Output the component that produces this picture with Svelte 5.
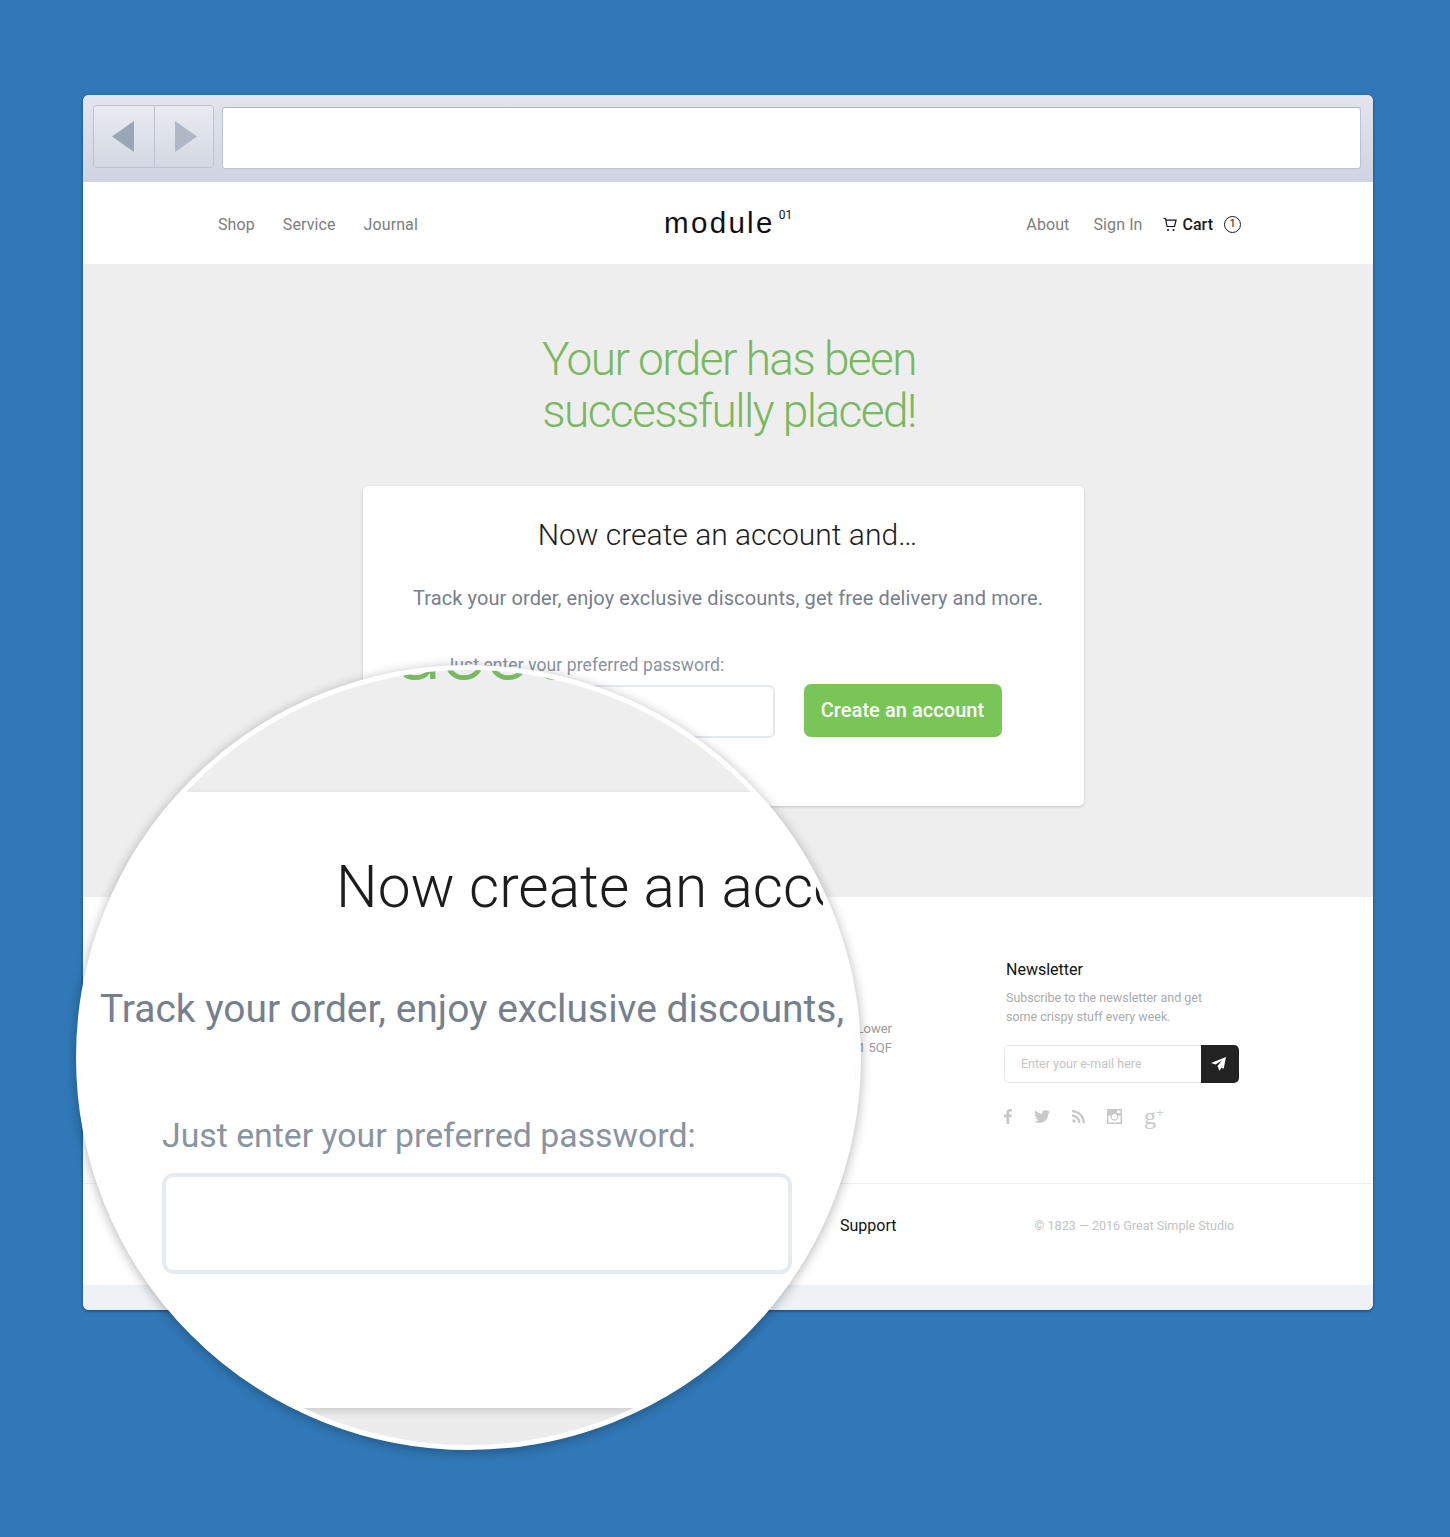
<script lang="ts">
  const navLeft = ['Shop', 'Service', 'Journal'];
</script>

<div class="page">
  <div class="window">
    <div class="chrome">
      <div class="arrows">
        <button type="button" class="arrow back" aria-label="Back">
          <svg width="22" height="31" viewBox="0 0 22 31"><path d="M22 0v31L0 15.500z" fill="#9aa5b6" /></svg>
        </button>
        <button type="button" class="arrow forward" aria-label="Forward">
          <svg width="22" height="31" viewBox="0 0 22 31"><path d="M0 0v31l22-15.500z" fill="#b0b8c7" /></svg>
        </button>
      </div>
      <div class="address"></div>
    </div>

    <header class="nav">
      <nav class="nav-left">
        {#each navLeft as item}
          <span>{item}</span>
        {/each}
      </nav>
      <div class="logo">module<sup>01</sup></div>
      <nav class="nav-right">
        <span>About</span>
        <span>Sign In</span>
        <span class="cart">
          <svg width="14" height="15" viewBox="0 0 14 15" fill="none" stroke="#111" stroke-width="1.2">
            <path d="M0.5 1.500h2l1.600 8h7.400l1.600-6.400H3" />
            <circle cx="5" cy="13" r="1" fill="#111" stroke="none" />
            <circle cx="10.500" cy="13" r="1" fill="#111" stroke="none" />
          </svg>
          Cart
        </span>
        <span class="count">1</span>
      </nav>
    </header>

    <main class="hero">
      <h1>Your order has been<br />successfully placed!</h1>
      <section class="card">
        <h2>Now create an account and…</h2>
        <p class="lead">Track your order, enjoy exclusive discounts, get free delivery and more.</p>
        <label class="pw-label" for="pw">Just enter your preferred password:</label>
        <div class="pw-row">
          <input id="pw" class="pw-input" type="password" />
          <button type="button" class="create">Create an account</button>
        </div>
      </section>
    </main>

    <footer class="footer">
      <div class="footer-top">
        <div class="address-col">
          <p>Lower</p>
          <p>W1 5QF</p>
        </div>
        <div class="newsletter">
          <h3>Newsletter</h3>
          <p>Subscribe to the newsletter and get<br />some crispy stuff every week.</p>
          <div class="subscribe">
            <span class="placeholder">Enter your e-mail here</span>
            <button type="button" class="send" aria-label="Send">
              <svg width="15" height="14" viewBox="0 0 15 14"><path d="M15 0 0 6l4.500 1.500L11 3.500 6.500 9l2 5 1.700-3.200 2.500 1z" fill="#fff" /></svg>
            </button>
          </div>
          <div class="social">
            <svg width="8" height="15" viewBox="0 0 8 15"><path d="M2.400 15V8.200H0V5.600h2.400V3.700C2.400 1.300 3.800 0 6 0l2 .1v2.400H6.600c-1.100 0-1.400.6-1.400 1.400v1.700h2.700l-.4 2.600H5.200V15z" /></svg>
            <svg width="16" height="13" viewBox="0 0 16 13"><path d="M16 1.500l-1.800.5 1.300-1.700-2 .8A3.200 3.200 0 0 0 8 3.700C5.300 3.600 3 2.300 1.200.4.300 2 .8 3.800 2.200 4.800L.7 4.400c0 1.600 1.100 2.900 2.600 3.300H1.900c.4 1.300 1.600 2.200 3 2.300C3.500 11.100 1.800 11.600 0 11.400 6.500 15.200 14.600 11 14.400 3.400z" /></svg>
            <svg width="13" height="13" viewBox="0 0 13 13"><circle cx="2" cy="11" r="1.700" /><path d="M0 4.500v2.300A6 6 0 0 1 6.200 13h2.300A8.400 8.400 0 0 0 0 4.500z" /><path d="M0 0v2.300A10.700 10.700 0 0 1 10.700 13H13A13 13 0 0 0 0 0z" /></svg>
            <svg width="15" height="15" viewBox="0 0 15 15"><path fill-rule="evenodd" d="M0 0h15v15H0zM1.500 6.500V13.500h12V6.500h-2.200a4 4 0 1 1-7.600 0zM10 1.500v2.500h3.500V1.500zM7.500 5a2.700 2.700 0 1 0 0 5.400 2.700 2.700 0 0 0 0-5.400z" /></svg>
            <span class="gplus">g<sup>+</sup></span>
          </div>
        </div>
      </div>
      <div class="footer-bottom">
        <span class="support">Support</span>
        <span class="copyright">© 1823 — 2016 Great Simple Studio</span>
      </div>
      <div class="strip"></div>
    </footer>
  </div>

  <!-- magnifier lying over the window -->
  <div class="lens">
    <div class="lens-hero">
      <div class="lens-heading">successfully placed!</div>
    </div>
    <div class="lens-card">
      <h2>Now create an account and…</h2>
      <p class="lens-lead">Track your order, enjoy exclusive discounts, get free delivery and more.</p>
      <div class="lens-label">Just enter your preferred password:</div>
      <div class="lens-input"></div>
    </div>
    <div class="lens-foot"></div>
  </div>
</div>

<style>
  :global(body) {
    margin: 0;
    background: #3078b7;
  }

  .page {
    position: relative;
    height: 1537px;
    padding: 95px 77px 0 83px;
    box-sizing: border-box;
    font-family: Roboto, "Liberation Sans", sans-serif;
    overflow: hidden;
  }

  .window {
    border-radius: 6px;
    overflow: hidden;
    box-shadow: 0 1px 3px rgba(10, 40, 80, 0.7);
    background: #fff;
  }

  .chrome {
    height: 87px;
    box-sizing: border-box;
    padding: 10px 12px 13px 10px;
    display: flex;
    gap: 8px;
    background: linear-gradient(#e2e5ed, #cfd5e0);
  }

  .arrows {
    display: flex;
    width: 121px;
    height: 63px;
    box-sizing: border-box;
    border: 1px solid #bcc3d0;
    border-radius: 4px;
    overflow: hidden;
  }

  .arrow {
    flex: 1;
    padding: 0;
    border: none;
    background: linear-gradient(#e8ebf1, #d3d8e2);
    display: flex;
    align-items: center;
    justify-content: center;
  }

  .back {
    flex: 0 0 60px;
    padding-right: 3px;
  }

  .forward {
    padding-left: 3px;
    border-left: 1px solid #bcc3d0;
  }

  .address {
    flex: 1;
    height: 62px;
    margin-top: 2px;
    box-sizing: border-box;
    background: #fff;
    border: 1px solid #bcc3d0;
    border-top-color: #aeb4c0;
    border-radius: 3px;
  }

  .nav {
    height: 82px;
    box-sizing: border-box;
    padding: 2px 132px 0 135px;
    display: flex;
    align-items: center;
    justify-content: space-between;
    font-size: 16px;
    letter-spacing: 0.1px;
    color: #7d7d7d;
  }

  .nav-left,
  .nav-right {
    display: flex;
    align-items: center;
  }

  .nav-left {
    gap: 28px;
  }

  .nav-right {
    gap: 24px;
  }

  .cart {
    display: flex;
    align-items: center;
    gap: 6px;
    margin-left: -4px;
    letter-spacing: 0;
    font-weight: 500;
    color: #1a1a1a;
  }

  .count {
    width: 17px;
    height: 17px;
    box-sizing: border-box;
    margin-left: -13px;
    border: 1.5px solid #1a1a1a;
    border-radius: 50%;
    font-size: 11px;
    line-height: 14px;
    letter-spacing: 0;
    text-align: center;
    color: #1a1a1a;
  }

  .logo {
    margin: -2px 0 0 12px;
    font-family: "Liberation Sans", Roboto, sans-serif;
    font-size: 29.500px;
    letter-spacing: 2.300px;
    color: #111;
  }

  .logo sup {
    margin-left: 4px;
    font-family: Roboto, sans-serif;
    font-size: 12px;
    letter-spacing: 0;
    line-height: 0;
    vertical-align: 14px;
  }

  .hero {
    height: 633px;
    box-sizing: border-box;
    padding-top: 69px;
    background: #eeeeee;
    display: flex;
    flex-direction: column;
    align-items: center;
  }

  h1 {
    margin: 0 0 49px;
    padding-left: 2px;
    font-size: 46px;
    line-height: 52px;
    font-weight: 300;
    letter-spacing: -1.550px;
    text-align: center;
    color: #78b860;
  }

  .card {
    width: 721px;
    height: 320px;
    margin-left: -10px;
    box-sizing: border-box;
    padding: 30px 0 0 87px;
    background: #fff;
    border-radius: 5px;
    box-shadow: 0 1px 3px rgba(0, 0, 0, 0.18);
  }

  .card h2 {
    width: 730px;
    margin: 0 0 0 -87px;
    font-size: 30px;
    line-height: 38px;
    font-weight: 300;
    text-align: center;
    color: #1c1c1c;
  }

  .lead {
    width: 731px;
    margin: 31px 0 0 -87px;
    font-size: 20px;
    line-height: 26px;
    letter-spacing: 0.1px;
    text-align: center;
    color: #76808c;
  }

  .pw-label {
    display: block;
    margin: 42px 0 0 -5px;
    font-size: 17.500px;
    line-height: 24px;
    letter-spacing: 0.1px;
    color: #8a93a0;
  }

  .pw-row {
    display: flex;
    gap: 29px;
    margin-top: 7px;
  }

  .pw-input {
    width: 325px;
    height: 53px;
    margin-top: 1px;
    box-sizing: border-box;
    border: 2px solid #e4e9ef;
    border-radius: 6px;
    background: #fff;
  }

  .create {
    width: 198px;
    height: 53px;
    padding: 0 0 2px;
    border: none;
    border-radius: 7px;
    background: #79c558;
    color: #fff;
    font: 500 20px Roboto, sans-serif;
    letter-spacing: 0.05px;
  }

  .footer-top {
    height: 287px;
    box-sizing: border-box;
    display: flex;
    border-bottom: 1px solid #eeeff2;
  }

  .address-col {
    width: 923px;
    box-sizing: border-box;
    padding: 123px 114px 0 0;
    text-align: right;
    font-size: 13px;
    line-height: 18.500px;
    color: #9a9a9a;
  }

  .address-col p {
    margin: 0;
  }

  .newsletter {
    width: 236px;
    padding-top: 62px;
  }

  .newsletter h3 {
    margin: 0;
    font-size: 16px;
    line-height: 22px;
    font-weight: 400;
    color: #111;
  }

  .newsletter p {
    margin: 7px 0 0;
    font-size: 12.500px;
    line-height: 19px;
    color: #aaaaaa;
  }

  .subscribe {
    width: 235px;
    height: 38px;
    margin: 19px 0 0 -2px;
    display: flex;
    align-items: stretch;
  }

  .placeholder {
    flex: 1;
    box-sizing: border-box;
    padding-left: 16px;
    border: 1.5px solid #e4e6ea;
    border-right: none;
    border-radius: 5px 0 0 5px;
    font-size: 12.500px;
    line-height: 35px;
    color: #c4c4c4;
  }

  .send {
    width: 38px;
    padding: 0 4px 0 0;
    border: none;
    border-radius: 0 5px 5px 0;
    background: #222;
    display: flex;
    align-items: center;
    justify-content: center;
  }

  .social {
    height: 18px;
    margin: 24px 0 0 -2px;
    display: flex;
    align-items: center;
    gap: 22px;
  }

  .social svg {
    fill: #c8c8c8;
  }

  .gplus {
    margin-top: -1px;
    font: 24px "Liberation Serif", serif;
    line-height: 18px;
    color: #c8c8c8;
  }

  .gplus sup {
    font-size: 14px;
    line-height: 0;
    vertical-align: 7px;
  }

  .footer-bottom {
    height: 101px;
    box-sizing: border-box;
    padding: 32px 0 0 757px;
    display: flex;
    align-items: flex-start;
    gap: 138px;
  }

  .support {
    font-size: 16px;
    line-height: 19px;
    color: #111;
  }

  .copyright {
    font-size: 12.600px;
    line-height: 19px;
    color: #c2c2c2;
  }

  .strip {
    height: 25px;
    background: #eef2f7;
  }

  .lens {
    position: absolute;
    left: 76px;
    top: 665px;
    width: 785px;
    height: 785px;
    box-sizing: border-box;
    border: 5px solid #fff;
    border-radius: 50%;
    overflow: hidden;
    background: #fff;
    box-shadow: 0 2px 12px rgba(0, 0, 0, 0.3);
  }

  .lens-hero {
    height: 122px;
    background: #eeeeee;
    overflow: hidden;
    position: relative;
  }

  .lens-heading {
    position: absolute;
    left: 267px;
    top: -72px;
    white-space: nowrap;
    font-size: 92px;
    line-height: 100px;
    font-weight: 300;
    letter-spacing: -3px;
    color: #78b860;
  }

  .lens-card {
    height: 616px;
    box-sizing: border-box;
    padding: 60px 0 0 81px;
    background: #fff;
    box-shadow: 0 3px 8px rgba(0, 0, 0, 0.14);
    position: relative;
  }

  .lens-card h2 {
    width: 487px;
    margin: 0 0 0 174px;
    overflow: hidden;
    white-space: nowrap;
    font-size: 58.600px;
    line-height: 70px;
    font-weight: 300;
    color: #1c1c1c;
  }

  .lens-lead {
    width: 748px;
    margin: 64px 0 0 -62px;
    overflow: hidden;
    white-space: nowrap;
    font-size: 38.950px;
    line-height: 46px;
    color: #76808c;
  }

  .lens-label {
    margin-top: 82px;
    font-size: 33.800px;
    line-height: 44px;
    color: #8a93a0;
  }

  .lens-input {
    width: 630px;
    height: 101px;
    margin-top: 15px;
    box-sizing: border-box;
    border: 4px solid #e6ebf0;
    border-radius: 12px;
  }

  .lens-foot {
    height: 60px;
    background: #ececec;
  }
</style>
